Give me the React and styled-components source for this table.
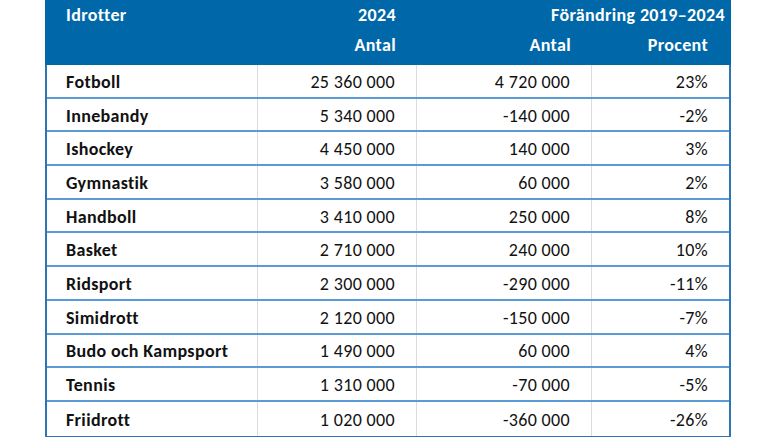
import React from "react";
import styled, { createGlobalStyle } from "styled-components";

const GlobalStyle = createGlobalStyle`
  html, body {
    margin: 0;
    padding: 0;
    background: #ffffff;
  }
  body {
    font-family: Carlito, Lato, "Open Sans", sans-serif;
    color: #111111;
  }
`;

const Page = styled.div`
  width: 777px;
  height: 437px;
  overflow: hidden;
  padding-left: 45px;
  box-sizing: border-box;
`;

const Table = styled.div`
  width: 686px;
  display: grid;
  grid-template-columns: 211px 159px 175px 137px;
  border: 2px solid #2e75b6;
  border-top: none;
  box-sizing: border-box;
  font-size: 18px;
  letter-spacing: 0.35px;
`;

const Head = styled.div`
  grid-column: 1 / -1;
  display: grid;
  grid-template-columns: subgrid;
  grid-template-rows: 29px 36px;
  background: #0068a8;
  color: #ffffff;
  font-weight: 700;
  margin: 0 -2px;
  padding: 0 2px;
`;

const HeadCell = styled.div`
  grid-column: ${p => p.$span || "auto"};
  padding-top: ${p => (p.$second ? "1px" : "1px")};
  line-height: ${p => (p.$second ? "30px" : "29px")};
  text-align: ${p => (p.$left ? "left" : "right")};
  padding-left: ${p => (p.$left ? "19px" : "0")};
  padding-right: ${p => (p.$left ? "0" : `${p.$pad ?? 21}px`)};
  white-space: nowrap;
`;

const Row = styled.div`
  grid-column: 1 / -1;
  display: grid;
  grid-template-columns: subgrid;
  height: 33.7px;
  box-sizing: border-box;
  border-bottom: ${p => (p.$last ? "none" : "2px solid #5b9bd5")};
`;

const Cell = styled.div`
  display: flex;
  align-items: center;
  justify-content: ${p => (p.$name ? "flex-start" : "flex-end")};
  padding-top: 2px;
  padding-left: ${p => (p.$name ? "19px" : "0")};
  padding-right: ${p => (p.$name ? "0" : "21px")};
  font-weight: ${p => (p.$name ? 700 : 400)};
  border-right: ${p => (p.$lastCol ? "none" : "1px solid #dcdcdc")};
  white-space: nowrap;
`;

const rows = [
  ["Fotboll", "25 360 000", "4 720 000", "23%"],
  ["Innebandy", "5 340 000", "-140 000", "-2%"],
  ["Ishockey", "4 450 000", "140 000", "3%"],
  ["Gymnastik", "3 580 000", "60 000", "2%"],
  ["Handboll", "3 410 000", "250 000", "8%"],
  ["Basket", "2 710 000", "240 000", "10%"],
  ["Ridsport", "2 300 000", "-290 000", "-11%"],
  ["Simidrott", "2 120 000", "-150 000", "-7%"],
  ["Budo och Kampsport", "1 490 000", "60 000", "4%"],
  ["Tennis", "1 310 000", "-70 000", "-5%"],
  ["Friidrott", "1 020 000", "-360 000", "-26%"],
];

export default function App() {
  return (
    <Page>
      <GlobalStyle />
      <Table>
        <Head>
          <HeadCell $left>Idrotter</HeadCell>
          <HeadCell>2024</HeadCell>
          <HeadCell $span="3 / 5" $pad={4}>
            Förändring 2019–2024
          </HeadCell>
          <HeadCell $second />
          <HeadCell $second>Antal</HeadCell>
          <HeadCell $second>Antal</HeadCell>
          <HeadCell $second>Procent</HeadCell>
        </Head>
        {rows.map((r, i) => (
          <Row key={r[0]} $last={i === rows.length - 1}>
            <Cell $name>{r[0]}</Cell>
            <Cell>{r[1]}</Cell>
            <Cell>{r[2]}</Cell>
            <Cell $lastCol>{r[3]}</Cell>
          </Row>
        ))}
      </Table>
    </Page>
  );
}
